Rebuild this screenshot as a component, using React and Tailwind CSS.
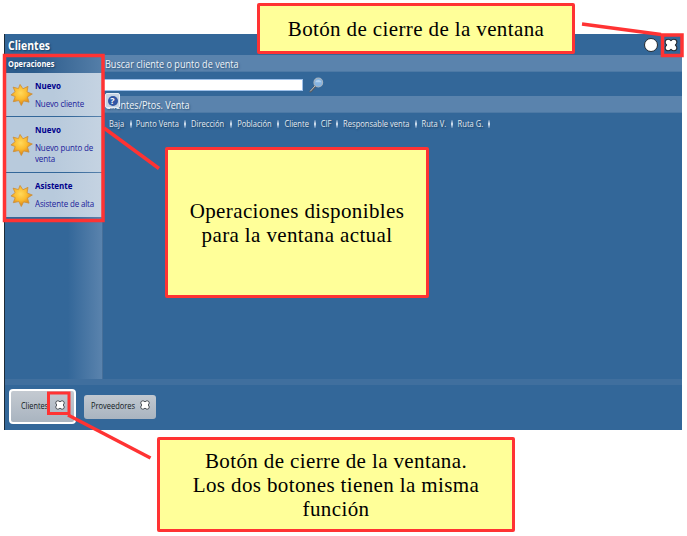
import React from "react";

const operations = [
  { title: "Nuevo", text: ["Nuevo cliente"], height: "h-[43px]" },
  { title: "Nuevo", text: ["Nuevo punto de", "venta"], height: "h-[55px]" },
  { title: "Asistente", text: ["Asistente de alta"], height: "h-[44px]" },
];

const columns = [
  { name: "Baja", width: "w-[28px]" },
  { name: "Punto Venta", width: "w-[54.5px]" },
  { name: "Dirección", width: "w-[46px]" },
  { name: "Población", width: "w-[47px]" },
  { name: "Cliente", width: "w-[36.5px]" },
  { name: "CIF", width: "w-[22.5px]" },
  { name: "Responsable venta", width: "w-[78.5px]" },
  { name: "Ruta V.", width: "w-[36.5px]" },
  { name: "Ruta G.", width: "w-[37px]" },
];

function SunIcon() {
  return (
    <svg viewBox="0 0 24 24" className="h-[23px] w-[23px] shrink-0">
      <defs>
        <radialGradient id="sun" cx="45%" cy="40%">
          <stop offset="0" stopColor="#ffd95a" />
          <stop offset="0.6" stopColor="#fbbc30" />
          <stop offset="1" stopColor="#e3921e" />
        </radialGradient>
      </defs>
      <path
        d="M10.500 1.500L13.500 6l5.300-2.500-1 5.800L23.300 11.500l-5.100 3 1.700 5.500-5.700-1.300L11.800 23.500 9.200 18.300l-5.800 1.200 2-5.300L1 12.500l4.300-3.400L3.200 4.300l5.600 1.500z"
        fill="url(#sun)"
        stroke="#c98d3a"
        strokeWidth="0.8"
        strokeLinejoin="round"
      />
    </svg>
  );
}

function CloseIcon({ className }) {
  return (
    <svg viewBox="0 0 14 14" className={className}>
      <path
        d="M3.800 1.200Q5.600 1 7 2.700Q8.400 1 10.200 1.200Q12.800 1.400 12.900 3.900Q12.900 5.600 11.400 7Q12.900 8.400 12.900 10.100Q12.800 12.700 10.200 12.800Q8.400 12.900 7 11.300Q5.600 12.900 3.800 12.800Q1.200 12.700 1.100 10.100Q1.100 8.400 2.600 7Q1.100 5.600 1.100 3.900Q1.200 1.400 3.800 1.200z"
        fill="#fff"
        stroke="#252a30"
        strokeWidth="1.1"
        strokeLinejoin="round"
      />
    </svg>
  );
}

function SearchIcon() {
  return (
    <svg viewBox="0 0 16 16" className="h-[16px] w-[16px]">
      <path d="M1.500 14.500L6.500 9" stroke="#555b63" strokeWidth="2.2" strokeLinecap="round" />
      <path d="M1.500 14L6 9" stroke="#c5c9cd" strokeWidth="0.9" strokeLinecap="round" />
      <circle cx="9.300" cy="5.500" r="4.300" fill="#86b3e0" stroke="#a4b4c3" strokeWidth="1.200" />
      <path d="M6.200 5.300a3.200 3.200 0 0 1 6.200 0z" fill="#b4d2ee" />
    </svg>
  );
}

function SectionBar({ children }) {
  return (
    <div className="flex h-[17px] shrink-0 items-center border-b border-[#4d79a5] bg-[#5a83ad] pl-[2px] pt-[2px] text-[10.500px] leading-none text-[#f1f5f9] [text-shadow:1px_1px_2px_#244c72]">
      <span className="origin-left scale-x-[0.865] whitespace-nowrap">{children}</span>
    </div>
  );
}

function Callout({ className, children }) {
  return (
    <div
      className={
        "absolute flex items-center justify-center rounded-[2px] border-[3px] border-[#ff3333] bg-[#ffff99] text-center font-['Liberation_Serif',serif] text-[21px] leading-[24px] tracking-[0.380px] text-black " +
        className
      }
    >
      {children}
    </div>
  );
}

export default function App() {
  return (
    <div className="relative h-[536px] w-[687px] overflow-hidden bg-white pl-[4px] pt-[34px] font-['Open_Sans','Noto_Sans',sans-serif]">
      <div className="flex h-[396px] w-[678px] flex-col border-l border-[#1d2b38] bg-[#336799]">
        <header className="flex h-[21px] shrink-0 items-center justify-between pl-[3px] pr-[4px]">
          <h1 className="origin-left scale-x-[0.910] pt-[2px] text-[11.500px] font-bold leading-none text-white [text-shadow:1px_1px_2px_#173a5b]">
            Clientes
          </h1>
          <div className="flex items-center gap-[6px]">
            <span className="h-[14px] w-[14px] rounded-full border border-[#252a30] bg-white" />
            <CloseIcon className="h-[14px] w-[14px]" />
          </div>
        </header>

        <main className="flex h-[324px] shrink-0">
          <aside className="w-[98px] shrink-0 border-r border-[#466f99] bg-linear-to-r from-[#336799] from-65% to-[#5a83ad]">
            <h2 className="flex h-[18px] items-center bg-linear-to-r from-[#2c5c8c] from-30% to-[#547ea8] pl-[3px] text-[8.500px] font-bold leading-none text-white [text-shadow:1px_1px_2px_#173a5b]">
              <span className="origin-left scale-x-[0.870]">Operaciones</span>
            </h2>
            <ul className="flex flex-col gap-px">
              {operations.map((op) => (
                <li
                  key={op.text[0]}
                  className={
                    "flex items-center gap-[2px] bg-linear-to-r from-[#b8cadc] from-50% to-[#c5d3e2] pl-[5px] text-[#20209a] " +
                    op.height
                  }
                >
                  <SunIcon />
                  <div className="flex h-full w-[70px] origin-left scale-x-[0.940] flex-col pt-[7px] text-[8.500px] leading-[11px]">
                    <strong className="leading-[12px] text-[#00008b]">{op.title}</strong>
                    <div className="pt-[6px] tracking-[-0.150px]">
                      {op.text.map((line) => (
                        <p key={line} className="whitespace-nowrap">
                          {line}
                        </p>
                      ))}
                    </div>
                  </div>
                </li>
              ))}
            </ul>
          </aside>

          <section className="flex min-w-0 grow flex-col">
            <SectionBar>Buscar cliente o punto de venta</SectionBar>
            <div className="flex h-[24px] shrink-0 items-center pt-px">
              <input
                aria-label="Buscar"
                className="h-[12px] w-[200px] border border-[#9fc1ea] bg-white outline-none"
              />
              <div className="pl-[6px]">
                <SearchIcon />
              </div>
            </div>
            <SectionBar>Clientes/Ptos. Venta</SectionBar>
            <div className="flex h-[22px] items-center pl-[0.500px] text-[8.500px] leading-none text-[#e4ebf2] [text-shadow:1px_1px_2px_#173a5b]">
              {columns.map((column) => (
                <div key={column.name} className={"flex shrink-0 items-center " + column.width}>
                  <span className="flex min-w-0 grow justify-center">
                    <span className="shrink-0 scale-x-[0.890] whitespace-nowrap">{column.name}</span>
                  </span>
                  <i className="h-[8px] w-[2px] shrink-0 bg-linear-to-b from-[#4d7aa8] via-[#dce8f4] to-[#4d7aa8] last:opacity-100" />
                </div>
              ))}
            </div>
          </section>
        </main>

        <div className="h-[6px] shrink-0 bg-[#406f9e]" />
        <footer className="flex grow items-center gap-[8px] pb-[2px] pl-[4px]">
          <button className="flex h-[35px] w-[67px] items-center justify-between rounded-[4px] border-2 border-white bg-linear-to-b from-[#c4cad1] to-[#a9b4c0] pl-[10px] pr-[9px] text-[8.500px] leading-none text-[#111922]">
            <span className="-mr-[8px] origin-left scale-x-[0.860]">Clientes</span>
            <CloseIcon className="mb-[3px] h-[10px] w-[10px] shrink-0" />
          </button>
          <button className="flex h-[24px] w-[72px] items-center justify-between rounded-[3px] bg-linear-to-b from-[#c1c8d0] to-[#a9b4c0] pl-[7px] pr-[6px] text-[8.500px] leading-none text-[#111922]">
            <span className="-mr-[8px] origin-left scale-x-[0.880]">Proveedores</span>
            <CloseIcon className="mb-[3px] h-[10px] w-[10px] shrink-0" />
          </button>
        </footer>
      </div>

      <div className="absolute left-[105px] top-[93px] flex h-[15px] w-[15px] items-center justify-center rounded-[2px] border border-[#e6edf5] bg-[#c6d4e3]">
        <span className="flex h-[10px] w-[10px] items-center justify-center rounded-full bg-[#3157a5] text-[9px] font-bold leading-none text-white">
          ?
        </span>
      </div>

      <svg className="absolute left-0 top-0 h-[536px] w-[687px]" stroke="#ff3333" strokeWidth="3.500" fill="none">
        <rect x="4.500" y="55.500" width="98.500" height="165" />
        <rect x="662.500" y="35" width="19.500" height="20.500" />
        <rect x="48.500" y="393" width="20.500" height="20.500" strokeWidth="3" />
        <path d="M104 128L159 168.500" />
        <path d="M582 24L661 34.500" />
        <path d="M68 415L150.500 458" />
      </svg>

      <Callout className="left-[257px] top-[3px] h-[51px] w-[318px]">
        <span>Botón de cierre de la ventana</span>
      </Callout>
      <Callout className="left-[165px] top-[147px] h-[151px] w-[264px]">
        <p>
          Operaciones disponibles
          <br />
          para la ventana actual
        </p>
      </Callout>
      <Callout className="left-[157px] top-[437px] h-[95px] w-[358px]">
        <p>
          Botón de cierre de la ventana.
          <br />
          Los dos botones tienen la misma
          <br />
          función
        </p>
      </Callout>
    </div>
  );
}
